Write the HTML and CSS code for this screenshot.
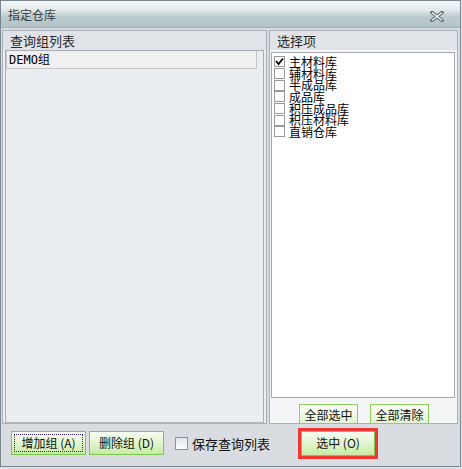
FILE: index.html
```html
<!DOCTYPE html>
<html lang="zh-CN">
<head>
  <meta charset="UTF-8">
  <title>指定仓库</title>
  <link rel="stylesheet" href="styles.css">
</head>
<body>

  <div class="window">
    <div class="titlebar">
      <span class="title">指定仓库</span>
      <svg class="close" width="14" height="11" viewBox="0 0 14 11">
        <path d="M2 1.5 L12 9.5 M12 1.5 L2 9.5" stroke="#5f6a70" stroke-width="3.4" stroke-linecap="square"/>
        <path d="M2 1.5 L12 9.5 M12 1.5 L2 9.5" stroke="#ffffff" stroke-width="1.2"/>
      </svg>
    </div>

    <div class="content">
      <div class="panes">
        <div class="pane pane-left">
          <div class="pane-header">查询组列表</div>
          <div class="group-list">
            <div class="group-item">DEMO组</div>
          </div>
        </div>

        <div class="pane pane-right">
          <div class="pane-header">选择项</div>
          <div class="option-list">
            <div class="option"><span class="check checked"><svg width="9" height="9" viewBox="0 0 9 9"><path d="M1 4 L3.5 7 L8 1.5" stroke="#000" stroke-width="1.8" fill="none"/></svg></span>主材料库</div>
            <div class="option"><span class="check"></span>辅材料库</div>
            <div class="option"><span class="check"></span>半成品库</div>
            <div class="option"><span class="check"></span>成品库</div>
            <div class="option"><span class="check"></span>积压成品库</div>
            <div class="option"><span class="check"></span>积压材料库</div>
            <div class="option"><span class="check"></span>直销仓库</div>
          </div>
          <div class="option-actions">
            <button class="tab-btn">全部选中</button>
            <button class="tab-btn">全部清除</button>
          </div>
        </div>
      </div>

      <div class="footer">
        <button class="btn btn-focus"><span class="focus-ring">增加组 (A)</span></button>
        <button class="btn">删除组 (D)</button>
        <label class="save-option"><span class="check check-big"></span>保存查询列表</label>
        <div class="highlight">
          <button class="btn btn-ok">选中 (O)</button>
        </div>
      </div>
    </div>
  </div>

</body>
</html>
```

FILE: styles.css
```css
* {
  box-sizing: border-box;
}

body {
  margin: 0;
  background: #dfe3e6;
  font-family: "Noto Sans CJK SC", "DejaVu Sans", sans-serif;
  font-size: 12px;
  color: #111;
}

.window {
  width: 461px;
  height: 467px;
  border: 1px solid #7b8890;
  display: flex;
  flex-direction: column;
  background: #d9dde2;
}

/* Title bar */
.titlebar {
  height: 27px;
  flex: none;
  display: flex;
  align-items: center;
  justify-content: space-between;
  padding: 2px 16px 0 7px;
  background: linear-gradient(#f4f7f8, #e1e9eb 35%, #bccbcf 60%, #b3c4c9);
  border-bottom: 1px solid #a3b2b7;
}

.title {
  color: #3a3f42;
  font-size: 12px;
  line-height: 12px;
}

.close {
  display: block;
  margin-top: 2px;
}

.content {
  flex: 1;
  display: flex;
  flex-direction: column;
  padding: 2px 2px 0 1px;
}

.panes {
  height: 394px;
  display: flex;
  gap: 2px;
}

.pane {
  border: 1px solid #a9b0b6;
  display: flex;
  flex-direction: column;
}

.pane-left {
  width: 265px;
  background: #ebeef1;
}

.pane-right {
  flex: 1;
  background: #f3f5f7;
}

.pane-header {
  height: 19px;
  flex: none;
  background: #e0e4e8;
  padding: 3px 0 0 7px;
  font-size: 13px;
  line-height: 13px;
  color: #2a2a2a;
}

/* Left list */
.group-list {
  flex: 1;
  margin: 0 2px 0 2px;
  border: 1px solid #a8aeb4;
  border-bottom-color: #b4b9be;
  background: #ebeef1;
}

.group-item {
  width: 251px;
  height: 18px;
  border: 1px solid #c3c7cb;
  border-top: none;
  background: #f0f0f0;
  padding: 3px 0 0 2px;
  font-size: 12px;
  line-height: 12px;
  color: #000;
  font-family: "DejaVu Sans Mono", "Noto Sans CJK SC", monospace;
}

/* Right list */
.option-list {
  height: 346px;
  flex: none;
  margin: 2px 2px 0 1px;
  border: 1px solid #a4a9ae;
  background: #ffffff;
  padding: 3px 0 0 2px;
}

.option {
  height: 11.67px;
  display: flex;
  align-items: center;
  font-size: 12px;
  line-height: 11.67px;
  color: #000;
}

.check {
  width: 11px;
  height: 11px;
  flex: none;
  border: 1px solid #999;
  background: #fff;
  margin-right: 4px;
  display: flex;
  align-items: center;
  justify-content: center;
}

.check svg {
  display: block;
}

.option-actions {
  flex: 1;
  display: flex;
  align-items: flex-end;
  gap: 12px;
  padding-left: 29px;
}

.tab-btn {
  width: 59px;
  height: 19px;
  border: 1px solid #8ccf5f;
  border-bottom: none;
  background: linear-gradient(#fbfdf8, #e3f3d2);
  font-family: inherit;
  font-size: 12px;
  line-height: 12px;
  color: #111;
  padding: 2px 0 0;
}

/* Footer */
.footer {
  flex: 1;
  display: flex;
  align-items: center;
  padding: 0 0 4px 9px;
}

.btn {
  height: 24px;
  border: 1px solid #7cc74e;
  background: linear-gradient(#f7fcf1, #e2f5cf 50%, #c6eba4);
  font-family: inherit;
  font-size: 12px;
  line-height: 12px;
  color: #111;
  padding: 0;
  width: 75px;
  margin-right: 3px;
}

.btn-focus {
  padding: 2px;
}

.focus-ring {
  display: flex;
  align-items: center;
  justify-content: center;
  height: 100%;
  border: 1px dotted #3a1a7a;
}

.save-option {
  display: flex;
  align-items: center;
  margin-left: 8px;
  font-size: 13px;
  color: #111;
  width: 123px;
}

.check-big {
  width: 13px;
  height: 13px;
  border-color: #8d9398;
  background: linear-gradient(#e4e7ea, #fafbfc);
}

.highlight {
  border: 3px solid #ee3634;
  display: flex;
}

.btn-ok {
  width: 74px;
  height: 25px;
  margin: 0;
}
```
